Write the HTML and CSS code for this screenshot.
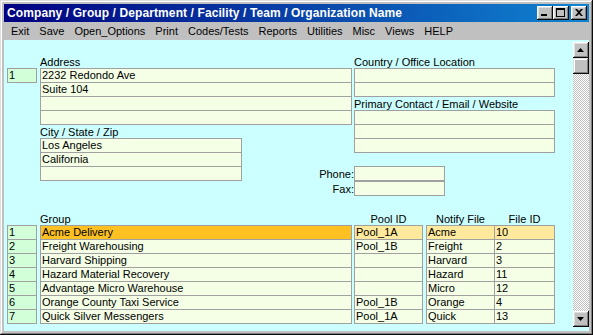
FILE: index.html
```html
<!DOCTYPE html>
<html lang="en">
<head>
    <meta charset="UTF-8">
    <meta name="viewport" content="width=device-width, initial-scale=1.0">
    <title>Organization Name</title>
    <link rel="stylesheet" href="styles.css">
</head>
<body>
    <div class="window">
        <header class="titlebar">
            <span class="title">Company / Group / Department / Facility / Team / Organization Name</span>
            <div class="controls">
                <button class="ctl" aria-label="Minimize">
                    <svg width="8" height="7" viewBox="0 0 8 7"><rect x="0" y="5" width="6" height="2" fill="#000"/></svg>
                </button>
                <button class="ctl" aria-label="Maximize">
                    <svg width="9" height="9" viewBox="0 0 9 9"><path d="M0 0h9v9H0z M1 2v6h7V2z" fill="#000" fill-rule="evenodd"/></svg>
                </button>
                <button class="ctl close" aria-label="Close">
                    <svg width="8" height="7" viewBox="0 0 8 7"><path d="M0 0h2l2 2 2-2h2L5 3.5 8 7H6L4 5 2 7H0l3-3.5z" fill="#000"/></svg>
                </button>
            </div>
        </header>

        <nav class="menubar">
            <span>Exit</span>
            <span>Save</span>
            <span>Open_Options</span>
            <span>Print</span>
            <span>Codes/Tests</span>
            <span>Reports</span>
            <span>Utilities</span>
            <span>Misc</span>
            <span>Views</span>
            <span>HELP</span>
        </nav>

        <div class="client">
            <main class="form">
                <!-- address / location block -->
                <section class="top">
                    <div class="numcol">
                        <div class="cell num">1</div>
                    </div>

                    <div class="leftcol">
                        <div class="label">Address</div>
                        <div class="stack">
                            <div class="cell">2232 Redondo Ave</div>
                            <div class="cell">Suite 104</div>
                            <div class="cell"></div>
                            <div class="cell"></div>
                        </div>
                        <div class="label gap">City / State / Zip</div>
                        <div class="stack city">
                            <div class="cell">Los Angeles</div>
                            <div class="cell">California</div>
                            <div class="cell"></div>
                        </div>
                    </div>

                    <div class="rightcol">
                        <div class="label">Country / Office Location</div>
                        <div class="stack">
                            <div class="cell"></div>
                            <div class="cell"></div>
                        </div>
                        <div class="label gap">Primary Contact / Email / Website</div>
                        <div class="stack">
                            <div class="cell"></div>
                            <div class="cell"></div>
                            <div class="cell"></div>
                        </div>
                        <div class="stack phones">
                            <div class="prow"><span class="plabel">Phone:</span><div class="cell pfield"></div></div>
                            <div class="prow"><span class="plabel">Fax:</span><div class="cell pfield"></div></div>
                        </div>
                    </div>
                </section>

                <!-- group list -->
                <section class="groups">
                    <div class="gcol numcol">
                        <div class="label"></div>
                        <div class="stack">
                            <div class="cell num">1</div>
                            <div class="cell num">2</div>
                            <div class="cell num">3</div>
                            <div class="cell num">4</div>
                            <div class="cell num">5</div>
                            <div class="cell num">6</div>
                            <div class="cell num">7</div>
                        </div>
                    </div>
                    <div class="gcol name">
                        <div class="label">Group</div>
                        <div class="stack">
                            <div class="cell selected">Acme Delivery</div>
                            <div class="cell">Freight Warehousing</div>
                            <div class="cell">Harvard Shipping</div>
                            <div class="cell">Hazard Material Recovery</div>
                            <div class="cell">Advantage Micro Warehouse</div>
                            <div class="cell">Orange County Taxi Service</div>
                            <div class="cell">Quick Silver Messengers</div>
                        </div>
                    </div>
                    <div class="gcol pool">
                        <div class="label center">Pool ID</div>
                        <div class="stack">
                            <div class="cell current">Pool_1A</div>
                            <div class="cell">Pool_1B</div>
                            <div class="cell"></div>
                            <div class="cell"></div>
                            <div class="cell"></div>
                            <div class="cell">Pool_1B</div>
                            <div class="cell">Pool_1A</div>
                        </div>
                    </div>
                    <div class="gcol notify">
                        <div class="label center">Notify File</div>
                        <div class="stack">
                            <div class="cell current">Acme</div>
                            <div class="cell">Freight</div>
                            <div class="cell">Harvard</div>
                            <div class="cell">Hazard</div>
                            <div class="cell">Micro</div>
                            <div class="cell">Orange</div>
                            <div class="cell">Quick</div>
                        </div>
                    </div>
                    <div class="gcol fileid">
                        <div class="label center">File ID</div>
                        <div class="stack">
                            <div class="cell current">10</div>
                            <div class="cell">2</div>
                            <div class="cell">3</div>
                            <div class="cell">11</div>
                            <div class="cell">12</div>
                            <div class="cell">4</div>
                            <div class="cell">13</div>
                        </div>
                    </div>
                </section>
            </main>

            <div class="scrollbar">
                <button class="sbtn" aria-label="Scroll up">
                    <svg width="7" height="4" viewBox="0 0 7 4"><path d="M3.5 0L7 4H0z" fill="#000"/></svg>
                </button>
                <div class="thumb"></div>
                <div class="track"></div>
                <button class="sbtn" aria-label="Scroll down">
                    <svg width="7" height="4" viewBox="0 0 7 4"><path d="M0 0h7L3.5 4z" fill="#000"/></svg>
                </button>
            </div>
        </div>
    </div>
</body>
</html>
```

FILE: styles.css
```css
* {
    box-sizing: border-box;
    margin: 0;
    padding: 0;
}

body {
    font-family: "Liberation Sans", Arial, sans-serif;
    font-size: 11px;
    color: #000;
    background-color: #c0c0c0;
    width: 593px;
    height: 335px;
    overflow: hidden;
}

/* window frame */
.window {
    width: 593px;
    height: 335px;
    padding: 4px;
    background-color: #c0c0c0;
    box-shadow: inset -1px -1px #0a0a0a, inset 1px 1px #dfdfdf,
                inset -2px -2px #808080, inset 2px 2px #fff;
    display: flex;
    flex-direction: column;
}

.titlebar {
    height: 18px;
    flex: none;
    background: linear-gradient(90deg, #000080, #1084d0);
    display: flex;
    align-items: center;
    padding: 0 2px 0 3px;
}

.title {
    color: #fff;
    font-weight: bold;
    font-size: 12px;
    line-height: 18px;
    letter-spacing: 0.1px;
    white-space: nowrap;
}

.controls {
    margin-left: auto;
    display: flex;
}

.ctl,
.sbtn {
    width: 16px;
    height: 14px;
    border: none;
    background-color: #c0c0c0;
    box-shadow: inset -1px -1px #0a0a0a, inset 1px 1px #fff,
                inset -2px -2px #808080, inset 2px 2px #dfdfdf;
    display: flex;
    align-items: center;
    justify-content: center;
    padding: 0 1px 1px 0;
}

.ctl.close {
    margin-left: 2px;
}

/* menu */
.menubar {
    height: 18px;
    flex: none;
    display: flex;
    align-items: center;
    padding: 1px 0 0 2px;
}

.menubar span {
    padding: 0 5px;
    line-height: 17px;
    white-space: nowrap;
}

/* client area */
.client {
    flex: 1;
    background-color: #ccffff;
    display: flex;
    min-height: 0;
}

.form {
    flex: 1;
    padding: 16px 0 0 3px;
}

.label {
    height: 12px;
    line-height: 12px;
    white-space: nowrap;
}

.label.gap {
    margin-top: 1px;
}

.label.center {
    text-align: center;
}

.stack {
    display: flex;
    flex-direction: column;
}

.cell {
    height: 15px;
    line-height: 13px;
    padding: 0 1px;
    border: 1px solid #a0a0a0;
    background-color: #f4ffe6;
    white-space: nowrap;
    overflow: hidden;
}

.stack > .cell + .cell,
.stack > .prow + .prow {
    margin-top: -1px;
}

.cell.num {
    background-color: #d2ffd8;
}

.cell.selected {
    background-color: #ffc022;
}

.cell.current {
    background-color: #ffe99c;
}

/* top block */
.top {
    display: flex;
    align-items: flex-start;
}

.numcol {
    width: 30px;
    margin-right: 3px;
}

.top .numcol {
    margin-top: 12px;
}

.leftcol {
    width: 312px;
    margin-right: 2px;
}

.stack.city {
    width: 202px;
}

.rightcol {
    width: 201px;
}

.phones {
    margin-top: 13px;
}

.prow {
    display: flex;
}

.plabel {
    width: 40px;
    margin-left: -40px;
    text-align: right;
    line-height: 15px;
    padding-top: 1px;
}

.pfield {
    width: 91px;
}

/* group list */
.groups {
    display: flex;
    margin-top: 16px;
}

.gcol.name {
    width: 312px;
    margin-right: 2px;
}

.gcol.pool {
    width: 69px;
    margin-right: 3px;
}

.gcol.notify {
    width: 69px;
}

.gcol.fileid {
    width: 61px;
    margin-left: -1px;
}

/* scrollbar */
.scrollbar {
    width: 16px;
    margin: 2px 0 4px;
    display: flex;
    flex-direction: column;
    background: repeating-conic-gradient(#c0c0c0 0 25%, #fff 0 50%) 0 0 / 2px 2px;
}

.sbtn,
.thumb {
    height: 16px;
    flex: none;
}

.thumb {
    background-color: #c0c0c0;
    box-shadow: inset -1px -1px #0a0a0a, inset 1px 1px #dfdfdf,
                inset -2px -2px #808080, inset 2px 2px #fff;
}

.track {
    flex: 1;
}
```
